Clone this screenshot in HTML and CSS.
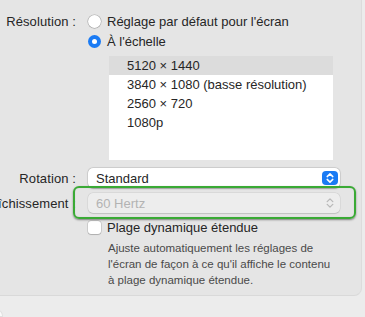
FILE: index.html
```html
<!DOCTYPE html>
<html lang="fr">
<head>
  <meta charset="UTF-8" />
  <meta name="viewport" content="width=device-width, initial-scale=1.0">
  <title>Moniteur</title>
  <link rel="stylesheet" href="styles.css">
</head>
<body>
  <div class="panel">
    <div class="row">
      <div class="label">Résolution :</div>
      <div class="controls">
        <div class="radio-row">
          <span class="radio"></span>
          <span>Réglage par défaut pour l'écran</span>
        </div>
        <div class="radio-row">
          <span class="radio checked"></span>
          <span>À l'échelle</span>
        </div>
        <ul class="list">
          <li class="selected">5120 × 1440</li>
          <li>3840 × 1080 (basse résolution)</li>
          <li>2560 × 720</li>
          <li>1080p</li>
        </ul>
      </div>
    </div>

    <div class="row row-rotation">
      <div class="label">Rotation :</div>
      <div class="popup">
        <span>Standard</span>
        <span class="stepper">
          <svg width="16" height="14" viewBox="0 0 16 14">
            <path d="M5.2 5.6 L8 2.9 L10.8 5.6 M5.2 8.4 L8 11.1 L10.8 8.4" fill="none" stroke="#fff" stroke-width="1.5" stroke-linecap="round" stroke-linejoin="round"/>
          </svg>
        </span>
      </div>
    </div>

    <div class="row row-refresh">
      <div class="label">Taux de rafraîchissement :</div>
      <div class="popup disabled">
        <span>60 Hertz</span>
        <span class="stepper">
          <svg width="16" height="14" viewBox="0 0 16 14">
            <path d="M5.2 5.6 L8 2.9 L10.8 5.6 M5.2 8.4 L8 11.1 L10.8 8.4" fill="none" stroke="#b8b8b8" stroke-width="1.3" stroke-linecap="round" stroke-linejoin="round"/>
          </svg>
        </span>
        <div class="focus-ring"></div>
      </div>
    </div>

    <div class="row row-hdr">
      <div class="label"></div>
      <div class="controls">
        <div class="check-row">
          <span class="checkbox"></span>
          <span>Plage dynamique étendue</span>
        </div>
        <p class="hint">Ajuste automatiquement les réglages de l'écran de façon à ce qu'il affiche le contenu à plage dynamique étendue.</p>
      </div>
    </div>
  </div>
  <div class="next-panel"></div>
</body>
</html>
```

FILE: styles.css
```css
html, body {
  height: 317px;
}
body {
  margin: 0;
  background: #ececec;
  font-family: "Liberation Sans", Arial, sans-serif;
  font-size: 13px;
  color: #262626;
  overflow: hidden;
}
.panel {
  margin-left: -20px;
  width: 381px;
  padding: 11px 0 7px;
  background: #e5e5e5;
  border-right: 1px solid #dcdcdc;
  border-bottom: 1px solid #d9d9d9;
  border-radius: 0 0 8px 0;
}
.row {
  display: grid;
  grid-template-columns: 96px 252px;
  column-gap: 12px;
}
.label {
  display: flex;
  justify-content: flex-end;
  white-space: nowrap;
  height: 20px;
  align-items: center;
  letter-spacing: 0.1px;
}
.radio-row, .check-row {
  display: flex;
  align-items: center;
  gap: 6px;
  height: 20px;
}
.radio {
  width: 13px;
  height: 13px;
  border-radius: 50%;
  background: #fff;
  box-shadow: 0 0 0 0.5px rgba(0,0,0,0.25), 0 0.5px 1px rgba(0,0,0,0.15);
  box-sizing: border-box;
}
.radio.checked {
  background: #1a7bf4;
  box-shadow: none;
  position: relative;
}
.radio.checked::after {
  content: "";
  position: absolute;
  left: 4px;
  top: 4px;
  width: 5px;
  height: 5px;
  border-radius: 50%;
  background: #fff;
}
.list {
  list-style: none;
  margin: 5px 0 0 21px;
  padding: 0;
  width: 224px;
  height: 104px;
  background: #fff;
}
.list li {
  height: 19px;
  line-height: 19px;
  padding-left: 18px;
}
.list li.selected {
  background: #dcdcdc;
}
.row-rotation {
  margin-top: 8px;
}
.row-refresh {
  margin-top: 5px;
}
.popup {
  position: relative;
  display: flex;
  align-items: center;
  justify-content: space-between;
  height: 20px;
  padding: 0 2px 0 8px;
  background: #fff;
  border-radius: 5px;
  box-shadow: 0 0 0 0.5px rgba(0,0,0,0.12), 0 0.5px 1.5px rgba(0,0,0,0.25);
}
.stepper {
  display: flex;
  width: 16px;
  height: 14px;
  border-radius: 4px;
  background: #1a7bf4;
}
.popup.disabled {
  background: #ededed;
  color: #b3b3b3;
  box-shadow: 0 0 0 0.5px rgba(0,0,0,0.08), 0 0.5px 1px rgba(0,0,0,0.12);
}
.popup.disabled .stepper {
  background: none;
}
.focus-ring {
  position: absolute;
  left: -15px;
  right: -16px;
  top: -7px;
  bottom: -6px;
  border: 2px solid #3aaa35;
  border-radius: 6px;
  box-shadow: 0 1px 2px rgba(0,0,0,0.45), inset 0 0 1px rgba(0,0,0,0.2);
}
.row-hdr {
  margin-top: 7px;
}
.check-row {
  height: 15px;
}
.checkbox {
  width: 13px;
  height: 13px;
  border-radius: 3px;
  background: #fff;
  box-shadow: 0 0 0 0.5px rgba(0,0,0,0.2), 0 0.5px 1px rgba(0,0,0,0.15);
}
.hint {
  margin: 5px 0 0 20px;
  width: 226px;
  font-size: 11.5px;
  line-height: 16px;
  color: #4a4a4a;
}
.next-panel {
  margin: 14px 0 0 -10px;
  width: 12px;
  height: 6px;
  background: #fafafa;
  border-radius: 6px 6px 0 0;
  box-shadow: 0 0 0 1px #e0e0e0;
}
```
